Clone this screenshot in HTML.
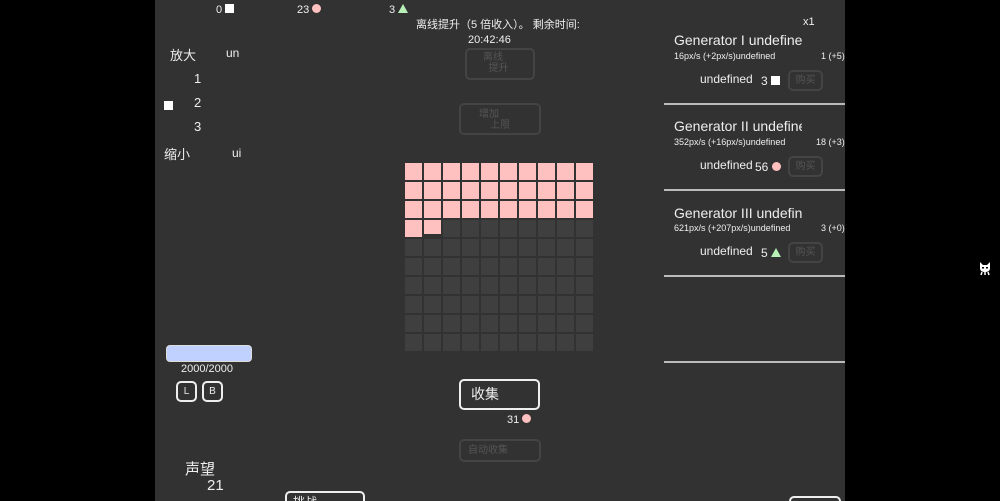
<!DOCTYPE html><html style="overflow:hidden;height:501px"><head><meta charset="utf-8"><style>
*{box-sizing:border-box}
body{margin:0;width:1000px;height:501px;background:#000;overflow:hidden;font-family:"Liberation Sans","Noto Sans CJK SC",sans-serif;color:#eee;position:relative}
#p{position:absolute;left:155px;top:0;width:690px;height:501px;background:#323232}
.a{position:absolute;white-space:nowrap}
.sq{display:inline-block;width:9px;height:9px;background:#fff}
.ci{display:inline-block;width:9px;height:9px;border-radius:50%;background:#ffc0c0}
.tr{display:inline-block;width:0;height:0;border-left:5px solid transparent;border-right:5px solid transparent;border-bottom:9px solid #b8f0b8}
.btn{position:absolute;border:2px solid #444;border-radius:5px;color:#555;font-size:10px}
.wb{position:absolute;border:2px solid #eee;border-radius:5px}
.hr{position:absolute;left:664px;width:181px;height:2px;background:#bbb}
.c{position:absolute;width:17px;height:17px;background:#3f3f3f}
.pk{background:#ffc0c0}
</style></head><body><div id="p"></div>
<div class="a" style="left:216px;top:4px;font-size:11px">0 <span class="sq"></span></div>
<div class="a" style="left:297px;top:4px;font-size:11px">23 <span class="ci"></span></div>
<div class="a" style="left:389px;top:4px;font-size:11px">3 <span class="tr"></span></div>
<div class="a" style="left:416px;top:16px;font-size:11px">离线提升（5 倍收入）。 剩余时间:</div>
<div class="a" style="left:468px;top:34px;font-size:11px">20:42:46</div>
<div class="btn" style="left:465px;top:48px;width:70px;height:32px"><div style="padding:2px 0 0 16px;line-height:11px">离线<br>&nbsp;&nbsp;提升</div></div>
<div class="btn" style="left:459px;top:103px;width:82px;height:32px"><div style="padding:4px 0 0 18px;line-height:11px">增加<br>&nbsp;&nbsp;&nbsp;&nbsp;上限</div></div>
<div class="a" style="left:170px;top:45px;font-size:13px">放大</div>
<div class="a" style="left:226px;top:46px;font-size:12px">un</div>
<div class="a" style="left:194px;top:71px;font-size:13px">1</div>
<div class="a" style="left:164px;top:97px"><span class="sq"></span></div>
<div class="a" style="left:194px;top:95px;font-size:13px">2</div>
<div class="a" style="left:194px;top:119px;font-size:13px">3</div>
<div class="a" style="left:164px;top:144px;font-size:13px">缩小</div>
<div class="a" style="left:232px;top:146px;font-size:12px">ui</div>
<div style="position:absolute;left:166px;top:345px;width:86px;height:17px;background:#c0d0ff;border:1px solid #ddd;border-radius:4px"></div>
<div class="a" style="left:181px;top:363px;font-size:11px">2000/2000</div>
<div class="wb" style="left:176px;top:381px;width:21px;height:21px;font-size:10px;text-align:center;line-height:17px">L</div>
<div class="wb" style="left:202px;top:381px;width:21px;height:21px;font-size:10px;text-align:center;line-height:17px">B</div>
<div class="a" style="left:185px;top:458px;font-size:15px">声望</div>
<div class="a" style="left:207px;top:477px;font-size:15px">21</div>
<div class="wb" style="left:285px;top:491px;width:80px;height:20px;font-size:12px;padding-left:6px">挑战</div>
<div class="wb" style="left:459px;top:379px;width:81px;height:31px;font-size:14px;line-height:27px;padding-left:10px">收集</div>
<div class="a" style="left:507px;top:414px;font-size:11px">31 <span class="ci"></span></div>
<div class="btn" style="left:459px;top:439px;width:82px;height:23px;line-height:19px"><span style="padding-left:7px">自动收集</span></div>
<div id="g"></div>
<div class="a" style="left:803px;top:16px;font-size:11px">x1</div>
<div class="a" style="left:674px;top:32px;font-size:14px;width:128px;overflow:hidden">Generator I undefined</div>
<div class="a" style="left:674px;top:51px;font-size:9px">16px/s (+2px/s)undefined</div>
<div class="a" style="left:821px;top:51px;font-size:9px;width:24px;overflow:hidden">1 (+5)</div>
<div class="a" style="left:700px;top:72px;font-size:12px">undefined</div>
<div class="a" style="left:761px;top:74px;font-size:12px">3 <span class="sq"></span></div>
<div class="btn" style="left:788px;top:70px;width:35px;height:21px;font-size:10px;text-align:center;line-height:17px">购买</div>
<div class="hr" style="top:103px"></div>
<div class="a" style="left:674px;top:118px;font-size:14px;width:128px;overflow:hidden">Generator II undefined</div>
<div class="a" style="left:674px;top:137px;font-size:9px">352px/s (+16px/s)undefined</div>
<div class="a" style="left:816px;top:137px;font-size:9px;width:29px;overflow:hidden">18 (+3)</div>
<div class="a" style="left:700px;top:158px;font-size:12px">undefined</div>
<div class="a" style="left:755px;top:160px;font-size:12px">56 <span class="ci"></span></div>
<div class="btn" style="left:788px;top:156px;width:35px;height:21px;font-size:10px;text-align:center;line-height:17px">购买</div>
<div class="hr" style="top:189px"></div>
<div class="a" style="left:674px;top:205px;font-size:14px;width:128px;overflow:hidden">Generator III undefined</div>
<div class="a" style="left:674px;top:223px;font-size:9px">621px/s (+207px/s)undefined</div>
<div class="a" style="left:821px;top:223px;font-size:9px;width:24px;overflow:hidden">3 (+0)</div>
<div class="a" style="left:700px;top:244px;font-size:12px">undefined</div>
<div class="a" style="left:761px;top:246px;font-size:12px">5 <span class="tr"></span></div>
<div class="btn" style="left:788px;top:242px;width:35px;height:21px;font-size:10px;text-align:center;line-height:17px">购买</div>
<div class="hr" style="top:275px"></div>
<div class="hr" style="top:361px"></div>
<div class="wb" style="left:789px;top:496px;width:52px;height:14px"></div>
<svg style="position:absolute;left:978px;top:261px" width="14" height="15" viewBox="0 0 14 15"><path d="M2 1L5 4H9L12 1V7C12 10 10 11 7 11C4 11 2 10 2 7Z" fill="#fff"/><rect x="4" y="6" width="2" height="1.5" fill="#000"/><rect x="8" y="6" width="2" height="1.5" fill="#000"/><path d="M4 11L3 14M10 11L11 14M7 11V14" stroke="#fff" stroke-width="1.5"/></svg>
<script>
var g='';for(var r=0;r<10;r++)for(var c=0;c<10;c++){var pk=r<3||(r==3&&c<2);g+='<div class="c'+(pk?' pk':'')+'" style="left:'+(405+c*19)+'px;top:'+(163+r*19)+'px;'+(r==3&&c==1?'height:14px':'')+'"></div>';}
document.getElementById('g').innerHTML=g;
</script>
</body></html>
